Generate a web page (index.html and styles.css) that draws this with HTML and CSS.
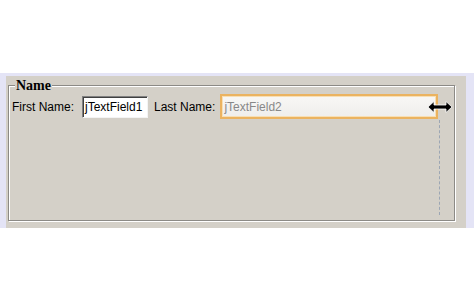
FILE: index.html
```html
<!DOCTYPE html>
<html lang="en">

<head>
    <meta charset="UTF-8">
    <title>Name Form</title>
    <link rel="stylesheet" href="styles.css">
</head>

<body>
    <div class="window">
        <div class="group">
            <div class="group-title">Name</div>
            <div class="row">
                <span class="label">First Name:</span>
                <div class="field field-first">jTextField1</div>
                <span class="label label-last">Last Name:</span>
                <div class="field field-last">jTextField2</div>
            </div>
            <!-- resize handle + guide drawn over the form -->
            <svg class="resize-arrow" width="26" height="14" viewBox="0 0 26 14">
                <path d="M1 7 L7 1.5 V5 H19 V1.5 L25 7 L19 12.5 V9 H7 V12.5 Z" fill="#000" stroke="#fff" stroke-width="0.8" stroke-linejoin="round"/>
            </svg>
            <div class="guide"></div>
        </div>
    </div>
</body>

</html>
```

FILE: styles.css
```css
* {
    margin: 0;
    padding: 0;
    box-sizing: border-box;
}

body {
    background: #fff;
    font-family: 'Liberation Sans', Arial, sans-serif;
    font-size: 12px;
    color: #000;
}

.window {
    margin-top: 73px;
    width: 474px;
    height: 155px;
    background: #d4d0c8;
    border-style: solid;
    border-color: #e4e4f6;
    border-width: 3px 8px 0 6px;
    padding: 9px 0 0 2px;
}

.group {
    position: relative;
    width: 447px;
    height: 136px;
    border: 1px solid #8c8a86;
    box-shadow: inset 1px 1px 0 #fff, 1px 1px 0 #fff;
}

.group-title {
    position: absolute;
    top: -7px;
    left: 6px;
    padding: 0 1px;
    background: #d4d0c8;
    font-family: 'Liberation Serif', 'Times New Roman', serif;
    font-size: 14px;
    font-weight: bold;
    line-height: 14px;
}

.row {
    display: flex;
    align-items: center;
    padding: 8px 0 0 3px;
}

.label {
    white-space: nowrap;
}

.label-last {
    margin-left: 6px;
}

.field {
    display: flex;
    align-items: center;
    white-space: nowrap;
}

.field-first {
    margin-left: 8px;
    width: 66px;
    height: 22px;
    padding-left: 2px;
    background: #fff;
    border: 1px solid;
    border-color: #808080 #f4f4f4 #f4f4f4 #808080;
    box-shadow: inset 1px 1px 0 #404040;
}

.field-last {
    margin-left: 5px;
    width: 218px;
    height: 25px;
    padding-left: 2px;
    color: #888;
    background: linear-gradient(#f8f7f5, #efeeec);
    border: 2px solid #ebb360;
    box-shadow: inset 0 0 0 1px #f8dfb4;
}

.resize-arrow {
    position: absolute;
    left: 418px;
    top: 14px;
}

.guide {
    position: absolute;
    left: 430px;
    top: 34px;
    height: 95px;
    border-left: 1px dashed #9ca6b4;
}
```
